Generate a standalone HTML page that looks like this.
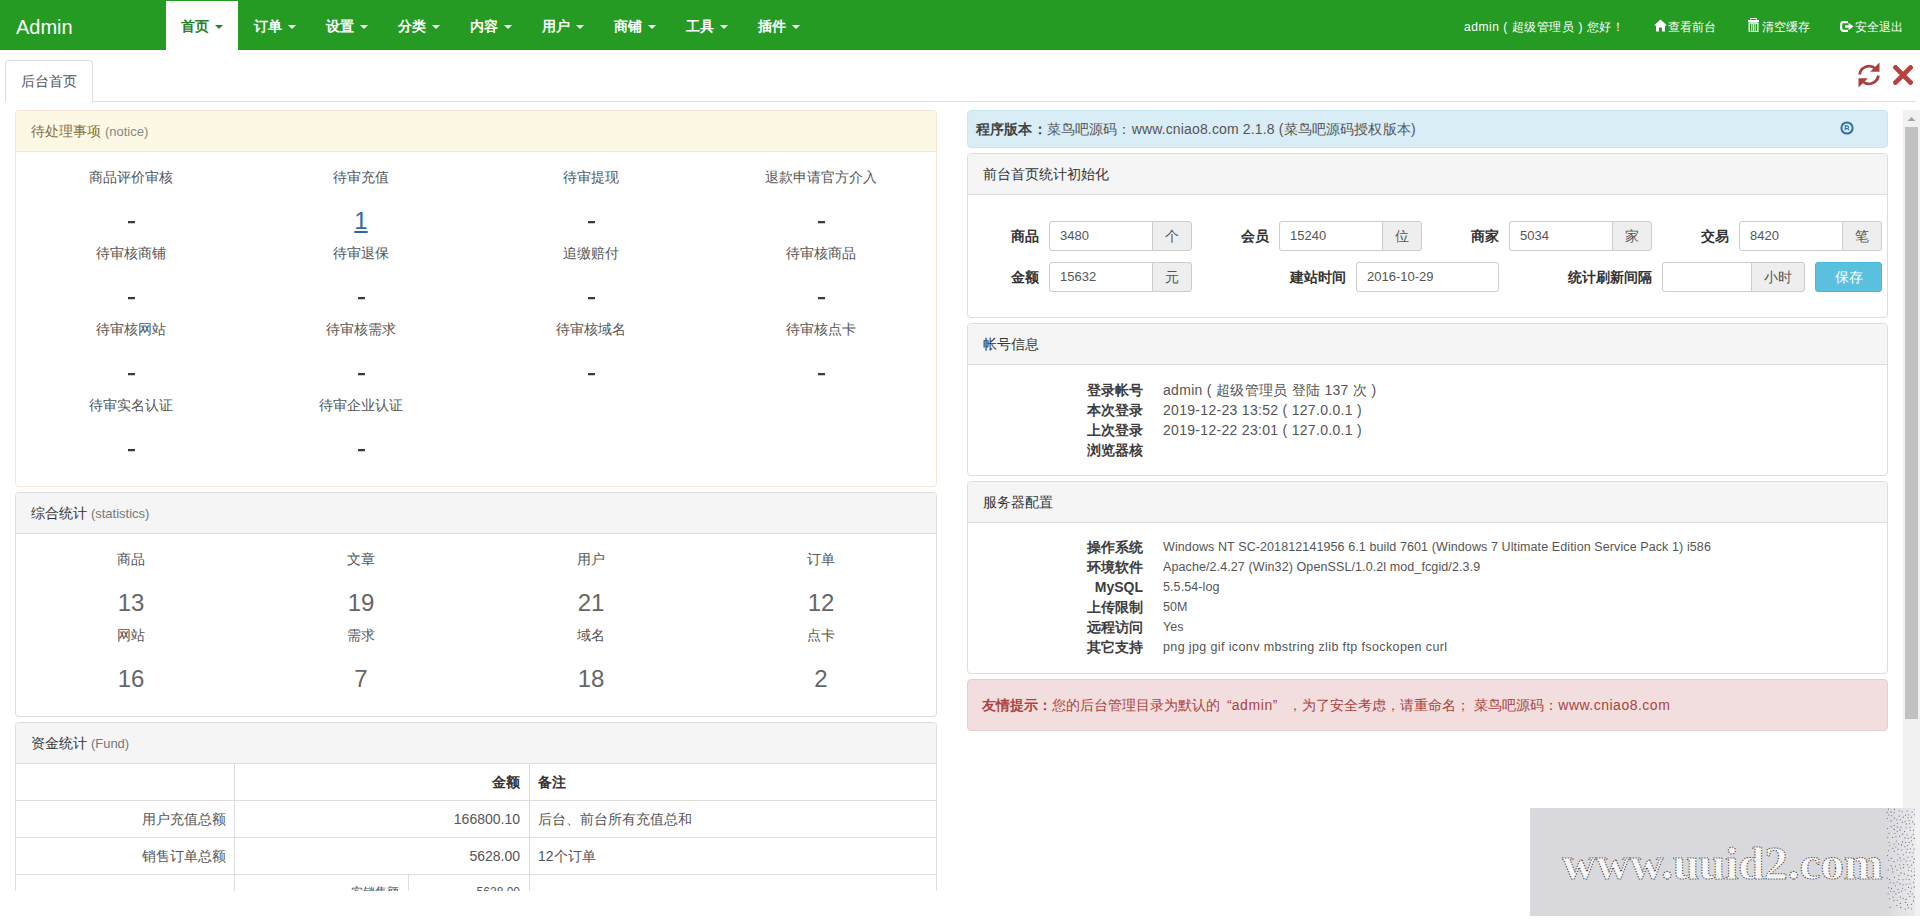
<!DOCTYPE html>
<html><head><meta charset="utf-8">
<style>
*{box-sizing:border-box;margin:0;padding:0}
html,body{width:1920px;height:921px;overflow:hidden;background:#fff;font-family:"Liberation Sans",sans-serif;font-size:14px;color:#333;position:relative}
.t{position:absolute;white-space:nowrap;line-height:20px}
#nav{position:absolute;left:0;top:0;width:1920px;height:50px;background:#259b24}
#brand{position:absolute;left:16px;top:14px;font-size:20px;color:#fff;line-height:26px}
.ni{position:absolute;top:1px;height:49px;line-height:50px;color:#fff;font-weight:bold;font-size:14px;white-space:nowrap}
.ni.act{background:#fff;color:#2b7f2b;left:166px;width:72px;padding-left:15px}
.caret{display:inline-block;width:0;height:0;border-top:4px solid;border-left:4px solid transparent;border-right:4px solid transparent;vertical-align:middle;margin-left:6px;position:relative;top:0px}
.nr{position:absolute;top:0;height:50px;line-height:54px;color:#fff;font-size:12px;white-space:nowrap}
.nr svg{position:absolute}
#tabline{position:absolute;left:92px;top:101px;width:1824px;height:1px;background:#ddd}
#tab1{position:absolute;left:5px;top:60px;width:88px;height:42px;border:1px solid #ddd;border-bottom:none;border-radius:4px 4px 0 0;background:#fff;font-size:14px;color:#555;line-height:40px;text-align:center}
#frame{position:absolute;left:0;top:110px;width:1903px;height:781px;overflow:hidden}
.panel{position:absolute;border:1px solid #ddd;border-radius:4px;background:#fff;overflow:hidden}
.ph{position:absolute;left:0;top:0;right:0;height:41px;line-height:40px;padding-left:15px;background:#f5f5f5;border-bottom:1px solid #ddd;color:#333;font-size:14px;white-space:nowrap}
.ph small{font-size:13px;color:#777}
.pw{border-color:#f2e6d4}
.pw .ph{background:#fcf8e3;border-color:#f5ead0;color:#8a6d3b}
.pw .ph small{color:#888}
.sl{position:absolute;width:230px;text-align:center;font-size:14px;color:#555;line-height:20px;white-space:nowrap}
.sv{position:absolute;width:230px;text-align:center;font-size:24px;color:#333;line-height:30px}
.sv.g{color:#666}
.sv a{color:#3069a6;text-decoration:underline}
.alert{position:absolute;border:1px solid;border-radius:4px;white-space:nowrap}
.inp{position:absolute;height:30px;border:1px solid #ccc;border-radius:3px;background:#fff;font-size:13px;color:#555;line-height:28px;padding-left:10px}
.add{position:absolute;top:-1px;height:30px;border:1px solid #ccc;border-radius:0 3px 3px 0;background:#eee;text-align:center;line-height:28px;font-size:14px;color:#555}
.fl{position:absolute;font-weight:bold;font-size:14px;color:#333;line-height:30px;white-space:nowrap;text-align:right}
.kl{position:absolute;font-weight:bold;font-size:14px;color:#3d3d3d;line-height:20px;white-space:nowrap;text-align:right;width:80px}
.kv{position:absolute;font-size:14px;color:#555;line-height:20px;white-space:nowrap;letter-spacing:0.3px}
.kv.s{font-size:12.5px;letter-spacing:0.1px}
table{position:absolute;border-collapse:collapse}
#scroll{position:absolute;left:1903px;top:110px;width:17px;height:806px;background:#f1f1f1}
#thumb{position:absolute;left:2px;top:17px;width:13px;height:592px;background:#c1c1c1}
#wm{position:absolute;left:1530px;top:808px;width:385px;height:108px;background:#d9d9dd;overflow:hidden}
.dash{display:block;width:7px;height:2px;margin:15px 0 0 112px;background:#3a3a3a;box-shadow:0 1px 0 rgba(51,51,51,0.25)}
.tb{position:absolute;border-bottom:1px solid #ddd}
.vl{position:absolute;width:1px;background:#ddd}
.td{position:absolute;line-height:37px;font-size:14px;color:#555;white-space:nowrap}
.td.b{font-weight:bold;color:#333}
.td.s{font-size:12px;line-height:34px}
.btn{position:absolute;width:67px;height:30px;background:#5bc0de;border:1px solid #46b8da;border-radius:3px;color:#fff;font-size:14px;line-height:28px;text-align:center}

</style></head><body>
<div id="nav">
<div id="brand">Admin</div>
<div class="ni act">首页<span class="caret"></span></div>
<div class="ni" style="left:254px">订单<span class="caret"></span></div>
<div class="ni" style="left:326px">设置<span class="caret"></span></div>
<div class="ni" style="left:398px">分类<span class="caret"></span></div>
<div class="ni" style="left:470px">内容<span class="caret"></span></div>
<div class="ni" style="left:542px">用户<span class="caret"></span></div>
<div class="ni" style="left:614px">商铺<span class="caret"></span></div>
<div class="ni" style="left:686px">工具<span class="caret"></span></div>
<div class="ni" style="left:758px">插件<span class="caret"></span></div>
<div class="nr" style="left:1464px;letter-spacing:0.55px">admin ( 超级管理员 ) 您好！</div>
<svg style="position:absolute;left:1654px;top:19px" width="13" height="13" viewBox="0 0 13 13"><path d="M6.5 0.5 L0 6.5 L2 6.5 L2 12.5 L5 12.5 L5 8.5 L8 8.5 L8 12.5 L11 12.5 L11 6.5 L13 6.5 Z" fill="#fff"/></svg>
<div class="nr" style="left:1668px">查看前台</div>
<svg style="position:absolute;left:1748px;top:18px" width="11" height="14" viewBox="0 0 11 14"><path d="M2.5 1.5V0.5h6v1" stroke="#fff" stroke-width="1" fill="none"/><rect x="0" y="2" width="11" height="2" fill="#fff"/><path d="M1.2 5h8.6v9H1.2z" fill="none" stroke="#fff" stroke-width="1.3"/><path d="M3.8 6v7M5.5 6v7M7.2 6v7" stroke="#fff" stroke-width="0.9"/></svg>
<div class="nr" style="left:1762px">清空缓存</div>
<svg style="position:absolute;left:1840px;top:21px" width="14" height="11" viewBox="0 0 14 11"><path d="M8 1.2H3.5a2.3 2.3 0 0 0-2.3 2.3v4a2.3 2.3 0 0 0 2.3 2.3H8" stroke="#fff" stroke-width="2.2" fill="none"/><path d="M5 4.3h3.6V1.8L13.5 5.5L8.6 9.2V6.7H5z" fill="#fff"/></svg>
<div class="nr" style="left:1855px">安全退出</div>
</div>
<div id="tabline"></div><div id="tab1">后台首页</div>
<svg style="position:absolute;left:1857px;top:62px" width="24" height="26" viewBox="0 0 24 26"><path d="M2.6 12.5 A9.5 9.5 0 0 1 18.5 6.8" stroke="#a8403f" stroke-width="2.8" fill="none"/><path d="M22.5 0.5 L22.5 9.8 L13.2 9.8 Z" fill="#a8403f"/><path d="M21.4 13.5 A9.5 9.5 0 0 1 5.5 19.2" stroke="#a8403f" stroke-width="2.8" fill="none"/><path d="M1.5 25.5 L1.5 16.2 L10.8 16.2 Z" fill="#a8403f"/></svg>
<svg style="position:absolute;left:1893px;top:65px" width="20" height="20" viewBox="0 0 20 20"><path d="M2.5 2.5L17.5 17.5M17.5 2.5L2.5 17.5" stroke="#b8403e" stroke-width="4.6" stroke-linecap="square" fill="none"/></svg>
<div id="frame">
<div class="panel pw" style="left:15px;top:0px;width:922px;height:377px">
<div class="ph">待处理事项 <small>(notice)</small></div>
<div class="sl" style="left:0px;top:56px">商品评价审核</div>
<div class="sv" style="left:0px;top:95px"><i class="dash"></i></div>
<div class="sl" style="left:230px;top:56px">待审充值</div>
<div class="sv" style="left:230px;top:95px"><a>1</a></div>
<div class="sl" style="left:460px;top:56px">待审提现</div>
<div class="sv" style="left:460px;top:95px"><i class="dash"></i></div>
<div class="sl" style="left:690px;top:56px">退款申请官方介入</div>
<div class="sv" style="left:690px;top:95px"><i class="dash"></i></div>
<div class="sl" style="left:0px;top:132px">待审核商铺</div>
<div class="sv" style="left:0px;top:171px"><i class="dash"></i></div>
<div class="sl" style="left:230px;top:132px">待审退保</div>
<div class="sv" style="left:230px;top:171px"><i class="dash"></i></div>
<div class="sl" style="left:460px;top:132px">追缴赔付</div>
<div class="sv" style="left:460px;top:171px"><i class="dash"></i></div>
<div class="sl" style="left:690px;top:132px">待审核商品</div>
<div class="sv" style="left:690px;top:171px"><i class="dash"></i></div>
<div class="sl" style="left:0px;top:208px">待审核网站</div>
<div class="sv" style="left:0px;top:247px"><i class="dash"></i></div>
<div class="sl" style="left:230px;top:208px">待审核需求</div>
<div class="sv" style="left:230px;top:247px"><i class="dash"></i></div>
<div class="sl" style="left:460px;top:208px">待审核域名</div>
<div class="sv" style="left:460px;top:247px"><i class="dash"></i></div>
<div class="sl" style="left:690px;top:208px">待审核点卡</div>
<div class="sv" style="left:690px;top:247px"><i class="dash"></i></div>
<div class="sl" style="left:0px;top:284px">待审实名认证</div>
<div class="sv" style="left:0px;top:323px"><i class="dash"></i></div>
<div class="sl" style="left:230px;top:284px">待审企业认证</div>
<div class="sv" style="left:230px;top:323px"><i class="dash"></i></div>
</div>
<div class="panel " style="left:15px;top:382px;width:922px;height:225px">
<div class="ph">综合统计 <small>(statistics)</small></div>
<div class="sl" style="left:0px;top:56px">商品</div>
<div class="sv g" style="left:0px;top:95px">13</div>
<div class="sl" style="left:230px;top:56px">文章</div>
<div class="sv g" style="left:230px;top:95px">19</div>
<div class="sl" style="left:460px;top:56px">用户</div>
<div class="sv g" style="left:460px;top:95px">21</div>
<div class="sl" style="left:690px;top:56px">订单</div>
<div class="sv g" style="left:690px;top:95px">12</div>
<div class="sl" style="left:0px;top:132px">网站</div>
<div class="sv g" style="left:0px;top:171px">16</div>
<div class="sl" style="left:230px;top:132px">需求</div>
<div class="sv g" style="left:230px;top:171px">7</div>
<div class="sl" style="left:460px;top:132px">域名</div>
<div class="sv g" style="left:460px;top:171px">18</div>
<div class="sl" style="left:690px;top:132px">点卡</div>
<div class="sv g" style="left:690px;top:171px">2</div>
</div>
<div class="panel " style="left:15px;top:612px;width:922px;height:300px">
<div class="ph">资金统计 <small>(Fund)</small></div>
<div class="tb" style="left:0;top:41px;width:920px;height:37px"></div>
<div class="tb" style="left:0;top:78px;width:920px;height:37px"></div>
<div class="tb" style="left:0;top:115px;width:920px;height:37px"></div>
<div class="tb" style="left:0;top:152px;width:920px;height:37px"></div>
<div class="vl" style="left:218px;top:41px;height:200px"></div>
<div class="vl" style="left:513px;top:41px;height:200px"></div>
<div class="vl" style="left:392px;top:152px;height:100px"></div>
<div class="td b" style="right:416px;top:41px">金额</div>
<div class="td b" style="left:522px;top:41px">备注</div>
<div class="td" style="right:710px;top:78px">用户充值总额</div>
<div class="td" style="right:416px;top:78px">166800.10</div>
<div class="td" style="left:522px;top:78px">后台、前台所有充值总和</div>
<div class="td" style="right:710px;top:115px">销售订单总额</div>
<div class="td" style="right:416px;top:115px">5628.00</div>
<div class="td" style="left:522px;top:115px">12个订单</div>
<div class="td s" style="right:537px;top:152px">实销售额</div>
<div class="td s" style="right:416px;top:152px">5628.00</div>

</div>
<div class="alert" style="left:967px;top:0px;width:921px;height:38px;background:#d9edf7;border-color:#c9e6f2;color:#31708f"><div class="t" style="left:8px;top:8px;color:#555;letter-spacing:0.15px"><b style="color:#444">程序版本：</b>菜鸟吧源码：www.cniao8.com 2.1.8 (菜鸟吧源码授权版本)</div><svg style="position:absolute;left:872px;top:10px" width="14" height="14" viewBox="0 0 14 14"><circle cx="7" cy="7" r="5.6" stroke="#2f6da5" stroke-width="2" fill="none"/><path d="M5.2 9.2V4.9h2a1.3 1.3 0 0 1 0 2.6H5.2M7.4 7.5L9 9.2" stroke="#2f6da5" stroke-width="1.1" fill="none"/></svg></div>
<div class="panel " style="left:967px;top:43px;width:921px;height:165px">
<div class="ph">前台首页统计初始化</div>
<div class="fl" style="left:11px;width:60px;top:67px">商品</div><div class="inp" style="left:81px;top:67px;width:104px;border-radius:3px 0 0 3px">3480</div><div class="add" style="left:184px;top:67px;width:40px">个</div>
<div class="fl" style="left:241px;width:60px;top:67px">会员</div><div class="inp" style="left:311px;top:67px;width:104px;border-radius:3px 0 0 3px">15240</div><div class="add" style="left:414px;top:67px;width:40px">位</div>
<div class="fl" style="left:471px;width:60px;top:67px">商家</div><div class="inp" style="left:541px;top:67px;width:104px;border-radius:3px 0 0 3px">5034</div><div class="add" style="left:644px;top:67px;width:40px">家</div>
<div class="fl" style="left:701px;width:60px;top:67px">交易</div><div class="inp" style="left:771px;top:67px;width:104px;border-radius:3px 0 0 3px">8420</div><div class="add" style="left:874px;top:67px;width:40px">笔</div>
<div class="fl" style="left:11px;width:60px;top:108px">金额</div><div class="inp" style="left:81px;top:108px;width:104px;border-radius:3px 0 0 3px">15632</div><div class="add" style="left:184px;top:108px;width:40px">元</div>
<div class="fl" style="left:298px;width:80px;top:108px">建站时间</div><div class="inp" style="left:388px;top:108px;width:143px;">2016-10-29</div>
<div class="fl" style="left:584px;width:100px;top:108px">统计刷新间隔</div><div class="inp" style="left:694px;top:108px;width:90px;border-radius:3px 0 0 3px"></div><div class="add" style="left:783px;top:108px;width:54px">小时</div>
<div class="btn" style="left:847px;top:108px">保存</div>
</div>
<div class="panel " style="left:967px;top:213px;width:921px;height:153px">
<div class="ph">帐号信息</div>
<div class="kl" style="left:95px;top:56px">登录帐号</div>
<div class="kv" style="left:195px;top:56px">admin ( 超级管理员 登陆 137 次 )</div>
<div class="kl" style="left:95px;top:76px">本次登录</div>
<div class="kv" style="left:195px;top:76px">2019-12-23 13:52 ( 127.0.0.1 )</div>
<div class="kl" style="left:95px;top:96px">上次登录</div>
<div class="kv" style="left:195px;top:96px">2019-12-22 23:01 ( 127.0.0.1 )</div>
<div class="kl" style="left:95px;top:116px">浏览器核</div>
<div class="kv" style="left:195px;top:116px"></div>
</div>
<div class="panel " style="left:967px;top:371px;width:921px;height:193px">
<div class="ph">服务器配置</div>
<div class="kl" style="left:95px;top:55px">操作系统</div>
<div class="kv s" style="left:195px;top:55px">Windows NT SC-201812141956 6.1 build 7601 (Windows 7 Ultimate Edition Service Pack 1) i586</div>
<div class="kl" style="left:95px;top:75px">环境软件</div>
<div class="kv s" style="left:195px;top:75px">Apache/2.4.27 (Win32) OpenSSL/1.0.2l mod_fcgid/2.3.9</div>
<div class="kl" style="left:95px;top:95px">MySQL</div>
<div class="kv s" style="left:195px;top:95px">5.5.54-log</div>
<div class="kl" style="left:95px;top:115px">上传限制</div>
<div class="kv s" style="left:195px;top:115px">50M</div>
<div class="kl" style="left:95px;top:135px">远程访问</div>
<div class="kv s" style="left:195px;top:135px">Yes</div>
<div class="kl" style="left:95px;top:155px">其它支持</div>
<div class="kv s" style="left:195px;top:155px;letter-spacing:0.38px">png jpg gif iconv mbstring zlib ftp fsockopen curl</div>
</div>
<div class="alert" style="left:967px;top:569px;width:921px;height:52px;background:#f2dede;border-color:#ebccd1;color:#a94442"><div class="t" style="left:14px;top:15px;color:#a94442"><b>友情提示：</b>您的后台管理目录为默认的<span style="padding-left:7px">“</span><span style="letter-spacing:0.6px">admin</span>”<span style="padding-left:7px"></span> ，为了安全考虑，请重命名； 菜鸟吧源码：<span style="letter-spacing:0.5px">www.cniao8.com</span></div></div>
</div>
<div id="scroll"><svg style="position:absolute;left:0;top:0" width="17" height="17"><path d="M4.5 11 L8.5 7 L12.5 11 Z" fill="#a3a3a3"/></svg><div id="thumb"></div></div>
<div id="wm"><svg width="385" height="108" style="position:absolute;left:0;top:0">
<defs><linearGradient id="wg" x1="0" y1="0" x2="1" y2="0"><stop offset="0" stop-color="#fff" stop-opacity="0"/><stop offset="1" stop-color="#fff" stop-opacity="0.45"/></linearGradient></defs><rect x="355" y="0" width="30" height="108" fill="url(#wg)"/><g fill="#56567a"><circle cx="358.6" cy="52.3" r="0.55"/><circle cx="369.1" cy="8.1" r="0.55"/><circle cx="368.9" cy="84.5" r="0.55"/><circle cx="361.0" cy="12.9" r="0.55"/><circle cx="379.9" cy="19.3" r="0.55"/><circle cx="374.9" cy="38.6" r="0.55"/><circle cx="358.8" cy="7.0" r="0.55"/><circle cx="376.1" cy="44.2" r="0.55"/><circle cx="373.4" cy="46.8" r="0.55"/><circle cx="379.2" cy="71.6" r="0.55"/><circle cx="361.3" cy="50.4" r="0.55"/><circle cx="381.5" cy="32.7" r="0.55"/><circle cx="373.6" cy="59.6" r="0.55"/><circle cx="375.6" cy="7.1" r="0.55"/><circle cx="357.6" cy="47.6" r="0.55"/><circle cx="381.4" cy="9.1" r="0.55"/><circle cx="381.2" cy="29.1" r="0.55"/><circle cx="361.2" cy="18.8" r="0.55"/><circle cx="364.4" cy="1.4" r="0.55"/><circle cx="376.3" cy="53.1" r="0.55"/><circle cx="368.0" cy="41.3" r="0.55"/><circle cx="358.5" cy="1.0" r="0.55"/><circle cx="359.8" cy="37.7" r="0.55"/><circle cx="381.5" cy="63.0" r="0.55"/><circle cx="364.1" cy="36.1" r="0.55"/><circle cx="370.0" cy="49.9" r="0.55"/><circle cx="383.6" cy="54.4" r="0.55"/><circle cx="372.2" cy="3.7" r="0.55"/><circle cx="379.9" cy="75.7" r="0.55"/><circle cx="371.5" cy="36.9" r="0.55"/><circle cx="357.8" cy="29.2" r="0.55"/><circle cx="367.2" cy="23.3" r="0.55"/><circle cx="382.2" cy="85.9" r="0.55"/><circle cx="375.3" cy="81.8" r="0.55"/><circle cx="378.0" cy="49.3" r="0.55"/><circle cx="379.1" cy="34.6" r="0.55"/><circle cx="384.2" cy="41.0" r="0.55"/><circle cx="383.5" cy="74.2" r="0.55"/><circle cx="379.6" cy="15.8" r="0.55"/><circle cx="384.4" cy="67.4" r="0.55"/><circle cx="372.4" cy="14.2" r="0.55"/><circle cx="383.1" cy="44.8" r="0.55"/><circle cx="380.1" cy="22.3" r="0.55"/><circle cx="364.3" cy="43.3" r="0.55"/><circle cx="382.5" cy="36.7" r="0.55"/><circle cx="372.6" cy="33.9" r="0.55"/><circle cx="372.6" cy="80.2" r="0.55"/><circle cx="372.7" cy="26.1" r="0.55"/><circle cx="381.5" cy="96.2" r="0.55"/><circle cx="359.0" cy="25.3" r="0.55"/><circle cx="377.2" cy="3.0" r="0.55"/><circle cx="369.3" cy="2.8" r="0.55"/><circle cx="373.0" cy="71.7" r="0.55"/><circle cx="365.5" cy="77.7" r="0.55"/><circle cx="371.0" cy="19.0" r="0.55"/><circle cx="377.5" cy="56.7" r="0.55"/><circle cx="370.3" cy="95.4" r="0.55"/><circle cx="379.9" cy="44.6" r="0.55"/><circle cx="380.4" cy="40.7" r="0.55"/><circle cx="368.3" cy="36.1" r="0.55"/><circle cx="364.2" cy="17.5" r="0.55"/><circle cx="364.9" cy="25.5" r="0.55"/><circle cx="364.4" cy="10.1" r="0.55"/><circle cx="378.0" cy="67.4" r="0.55"/><circle cx="384.6" cy="16.1" r="0.55"/><circle cx="376.1" cy="71.0" r="0.55"/><circle cx="384.3" cy="50.9" r="0.55"/><circle cx="374.3" cy="65.9" r="0.55"/><circle cx="365.5" cy="58.3" r="0.55"/><circle cx="369.6" cy="28.1" r="0.55"/><circle cx="383.5" cy="22.3" r="0.55"/><circle cx="365.9" cy="85.9" r="0.55"/><circle cx="378.0" cy="85.8" r="0.55"/><circle cx="385.0" cy="60.5" r="0.55"/><circle cx="383.2" cy="26.2" r="0.55"/><circle cx="375.0" cy="29.9" r="0.55"/><circle cx="382.1" cy="48.8" r="0.55"/><circle cx="369.8" cy="56.7" r="0.55"/><circle cx="375.7" cy="94.4" r="0.55"/><circle cx="366.8" cy="97.5" r="0.55"/><circle cx="382.1" cy="4.1" r="0.55"/><circle cx="365.9" cy="28.8" r="0.55"/><circle cx="378.6" cy="62.3" r="0.55"/><circle cx="381.7" cy="100.8" r="0.55"/><circle cx="375.3" cy="101.1" r="0.55"/><circle cx="367.3" cy="15.3" r="0.55"/><circle cx="376.0" cy="19.7" r="0.55"/><circle cx="367.4" cy="52.0" r="0.55"/><circle cx="361.5" cy="80.4" r="0.55"/><circle cx="358.1" cy="85.7" r="0.55"/><circle cx="373.8" cy="56.6" r="0.55"/><circle cx="368.9" cy="67.5" r="0.55"/><circle cx="370.3" cy="11.8" r="0.55"/><circle cx="376.0" cy="91.4" r="0.55"/><circle cx="379.0" cy="12.6" r="0.55"/><circle cx="368.0" cy="81.6" r="0.55"/><circle cx="357.1" cy="4.4" r="0.55"/><circle cx="366.9" cy="11.7" r="0.55"/><circle cx="381.4" cy="80.0" r="0.55"/><circle cx="364.0" cy="92.3" r="0.55"/><circle cx="371.9" cy="42.0" r="0.55"/><circle cx="358.6" cy="79.7" r="0.55"/><circle cx="370.0" cy="75.9" r="0.55"/><circle cx="362.9" cy="63.9" r="0.55"/><circle cx="361.0" cy="3.9" r="0.55"/><circle cx="378.3" cy="99.8" r="0.55"/><circle cx="359.4" cy="90.7" r="0.55"/><circle cx="362.8" cy="40.2" r="0.55"/><circle cx="371.0" cy="64.9" r="0.55"/><circle cx="373.1" cy="76.7" r="0.55"/><circle cx="370.7" cy="99.4" r="0.55"/><circle cx="368.8" cy="71.5" r="0.55"/><circle cx="381.7" cy="57.1" r="0.55"/><circle cx="366.3" cy="33.0" r="0.55"/><circle cx="357.1" cy="70.1" r="0.55"/><circle cx="363.8" cy="75.1" r="0.55"/><circle cx="370.0" cy="21.9" r="0.55"/><circle cx="364.1" cy="4.8" r="0.55"/><circle cx="383.5" cy="92.9" r="0.55"/><circle cx="368.0" cy="46.3" r="0.55"/><circle cx="384.4" cy="6.7" r="0.55"/><circle cx="374.0" cy="51.0" r="0.55"/><circle cx="370.3" cy="89.1" r="0.55"/><circle cx="379.9" cy="88.4" r="0.55"/><circle cx="370.9" cy="52.8" r="0.55"/><circle cx="364.0" cy="83.5" r="0.55"/><circle cx="359.7" cy="71.6" r="0.55"/><circle cx="364.4" cy="69.5" r="0.55"/><circle cx="364.0" cy="53.6" r="0.55"/><circle cx="375.1" cy="13.2" r="0.55"/><circle cx="382.6" cy="13.9" r="0.55"/><circle cx="380.1" cy="52.8" r="0.55"/><circle cx="384.2" cy="30.4" r="0.55"/><circle cx="362.4" cy="29.6" r="0.55"/><circle cx="363.0" cy="89.1" r="0.55"/><circle cx="377.1" cy="26.7" r="0.55"/><circle cx="378.0" cy="9.7" r="0.55"/><circle cx="361.0" cy="57.9" r="0.55"/><circle cx="378.7" cy="6.8" r="0.55"/><circle cx="358.2" cy="62.0" r="0.55"/><circle cx="359.1" cy="34.3" r="0.55"/><circle cx="361.7" cy="7.7" r="0.55"/><circle cx="373.3" cy="9.1" r="0.55"/><circle cx="358.6" cy="42.8" r="0.55"/><circle cx="378.4" cy="79.4" r="0.55"/><circle cx="374.6" cy="23.6" r="0.55"/><circle cx="373.2" cy="90.2" r="0.55"/><circle cx="360.1" cy="99.4" r="0.55"/><circle cx="376.2" cy="15.9" r="0.55"/><circle cx="377.1" cy="41.3" r="0.55"/><circle cx="385.0" cy="1.5" r="0.55"/><circle cx="371.8" cy="83.1" r="0.55"/><circle cx="380.3" cy="83.6" r="0.55"/><circle cx="384.9" cy="71.2" r="0.55"/><circle cx="375.6" cy="34.3" r="0.55"/><circle cx="364.2" cy="21.4" r="0.55"/><circle cx="370.7" cy="60.0" r="0.55"/><circle cx="378.3" cy="30.4" r="0.55"/><circle cx="367.2" cy="74.0" r="0.55"/><circle cx="367.3" cy="92.2" r="0.55"/><circle cx="384.8" cy="63.7" r="0.55"/><circle cx="384.1" cy="88.9" r="0.55"/><circle cx="377.6" cy="37.3" r="0.55"/><circle cx="381.7" cy="68.2" r="0.55"/><circle cx="362.5" cy="60.8" r="0.55"/><circle cx="377.6" cy="96.9" r="0.55"/><circle cx="357.6" cy="20.5" r="0.55"/><circle cx="379.1" cy="59.1" r="0.55"/><circle cx="365.9" cy="39.0" r="0.55"/><circle cx="360.8" cy="83.3" r="0.55"/><circle cx="384.2" cy="78.9" r="0.55"/><circle cx="376.1" cy="76.2" r="0.55"/><circle cx="367.1" cy="62.1" r="0.55"/><circle cx="360.2" cy="74.8" r="0.55"/><circle cx="367.3" cy="19.1" r="0.55"/><circle cx="357.3" cy="10.5" r="0.55"/></g>
<text x="32" y="71" font-family="Liberation Serif" font-weight="bold" font-size="46" fill="#f6f6f6" stroke="#4a4a4a" stroke-width="1.05" stroke-dasharray="1.3 1.4" textLength="321" lengthAdjust="spacingAndGlyphs">www.uuid2.com</text>
</svg></div>
</body></html>
